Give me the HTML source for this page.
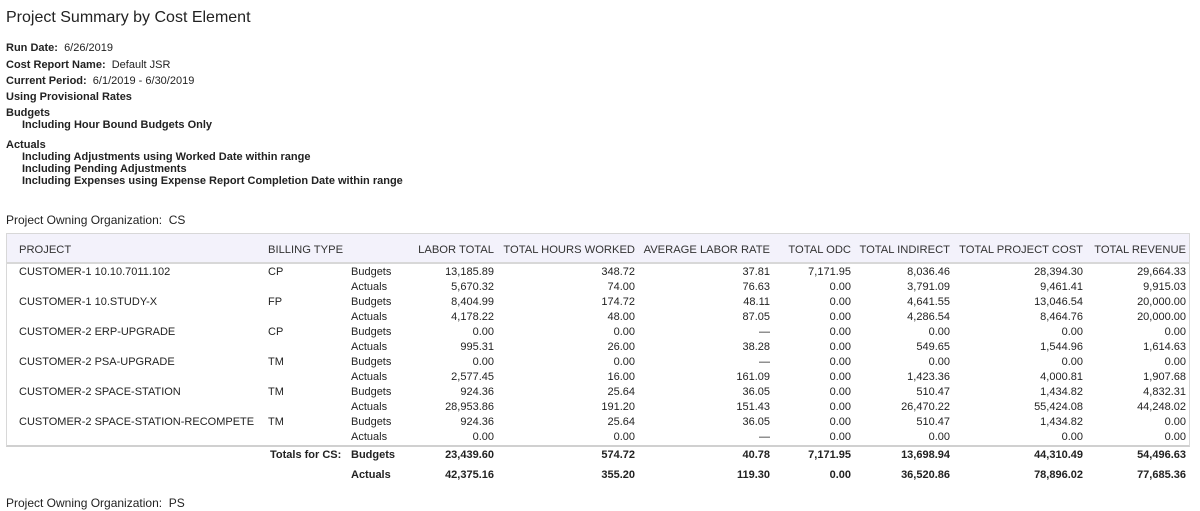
<!DOCTYPE html>
<html><head><meta charset="utf-8"><style>
*{margin:0;padding:0;box-sizing:border-box}
body{width:1200px;height:503px;overflow:hidden;background:#fff;font-family:"Liberation Sans",Arial,sans-serif;font-size:11px;color:#222;position:relative}
.a{position:absolute;white-space:nowrap;line-height:14px}
.r{position:absolute;white-space:nowrap;line-height:14px;text-align:right}
.t{font-size:16px;line-height:20px;color:#222}
.hdr{position:absolute;left:6px;top:233px;width:1184px;height:31px;background:#f3f2fb;border:1px solid #d8d8d8;border-bottom:2px solid #d8d8d8}
.box{position:absolute;left:6px;top:233px;width:1184px;height:214px;border:1px solid #d8d8d8;border-bottom:2px solid #d0d0d0}
.h{color:#333;font-size:11.2px}
b{font-weight:bold}
</style></head><body>
<div class="a t" style="left:6px;top:8px">Project Summary by Cost Element</div>
<div class="a" style="left:6px;top:41px"><b>Run Date:</b>&nbsp; 6/26/2019</div>
<div class="a" style="left:6px;top:58px"><b>Cost Report Name:</b>&nbsp; Default JSR</div>
<div class="a" style="left:6px;top:74px"><b>Current Period:</b>&nbsp; 6/1/2019 - 6/30/2019</div>
<div class="a" style="left:6px;top:90px"><b>Using Provisional Rates</b></div>
<div class="a" style="left:6px;top:106px"><b>Budgets</b></div>
<div class="a" style="left:22px;top:118px"><b>Including Hour Bound Budgets Only</b></div>
<div class="a" style="left:6px;top:138px"><b>Actuals</b></div>
<div class="a" style="left:22px;top:150px"><b>Including Adjustments using Worked Date within range</b></div>
<div class="a" style="left:22px;top:162px"><b>Including Pending Adjustments</b></div>
<div class="a" style="left:22px;top:174px"><b>Including Expenses using Expense Report Completion Date within range</b></div>
<div class="a" style="left:6px;top:212px;font-size:12px;line-height:16px">Project Owning Organization:&nbsp; CS</div>
<div class="box"></div>
<div class="hdr"></div>
<div id="t"></div>
<div class="a" style="left:6px;top:495px;font-size:12px;line-height:16px">Project Owning Organization:&nbsp; PS</div>
<script>
var H=[["PROJECT",19,0],["BILLING TYPE",268,0],["LABOR TOTAL",494,1],["TOTAL HOURS WORKED",635,1],["AVERAGE LABOR RATE",770,1],["TOTAL ODC",851,1],["TOTAL INDIRECT",950,1],["TOTAL PROJECT COST",1083,1],["TOTAL REVENUE",1186,1]];
var R=[0,0,0,494,635,770,851,950,1083,1186];
var D=[
["CUSTOMER-1 10.10.7011.102","CP","Budgets","13,185.89","348.72","37.81","7,171.95","8,036.46","28,394.30","29,664.33"],
["","","Actuals","5,670.32","74.00","76.63","0.00","3,791.09","9,461.41","9,915.03"],
["CUSTOMER-1 10.STUDY-X","FP","Budgets","8,404.99","174.72","48.11","0.00","4,641.55","13,046.54","20,000.00"],
["","","Actuals","4,178.22","48.00","87.05","0.00","4,286.54","8,464.76","20,000.00"],
["CUSTOMER-2 ERP-UPGRADE","CP","Budgets","0.00","0.00","—","0.00","0.00","0.00","0.00"],
["","","Actuals","995.31","26.00","38.28","0.00","549.65","1,544.96","1,614.63"],
["CUSTOMER-2 PSA-UPGRADE","TM","Budgets","0.00","0.00","—","0.00","0.00","0.00","0.00"],
["","","Actuals","2,577.45","16.00","161.09","0.00","1,423.36","4,000.81","1,907.68"],
["CUSTOMER-2 SPACE-STATION","TM","Budgets","924.36","25.64","36.05","0.00","510.47","1,434.82","4,832.31"],
["","","Actuals","28,953.86","191.20","151.43","0.00","26,470.22","55,424.08","44,248.02"],
["CUSTOMER-2 SPACE-STATION-RECOMPETE","TM","Budgets","924.36","25.64","36.05","0.00","510.47","1,434.82","0.00"],
["","","Actuals","0.00","0.00","—","0.00","0.00","0.00","0.00"]];
var s="";
H.forEach(function(h){s+=h[2]?'<div class="r h" style="right:'+(1200-h[1])+'px;top:243px">'+h[0]+'</div>':'<div class="a h" style="left:'+h[1]+'px;top:243px">'+h[0]+'</div>';});
function row(d,top,bold){
 var st=bold?'font-weight:bold;':'';
 if(d[0])s+='<div class="a" style="'+st+'left:19px;top:'+top+'px">'+d[0]+'</div>';
 if(d[1])s+='<div class="a" style="'+st+'left:268px;top:'+top+'px">'+d[1]+'</div>';
 s+='<div class="a" style="'+st+'left:351px;top:'+top+'px">'+d[2]+'</div>';
 for(var i=3;i<10;i++)s+='<div class="r" style="'+st+'right:'+(1200-R[i])+'px;top:'+top+'px">'+d[i]+'</div>';
}
D.forEach(function(d,k){row(d,265+15*k,false);});
s+='<div class="a" style="font-weight:bold;left:270px;top:448px">Totals for CS:</div>';
row(["","","Budgets","23,439.60","574.72","40.78","7,171.95","13,698.94","44,310.49","54,496.63"],448,true);
row(["","","Actuals","42,375.16","355.20","119.30","0.00","36,520.86","78,896.02","77,685.36"],468,true);
document.getElementById("t").innerHTML=s;
</script>
</body></html>
